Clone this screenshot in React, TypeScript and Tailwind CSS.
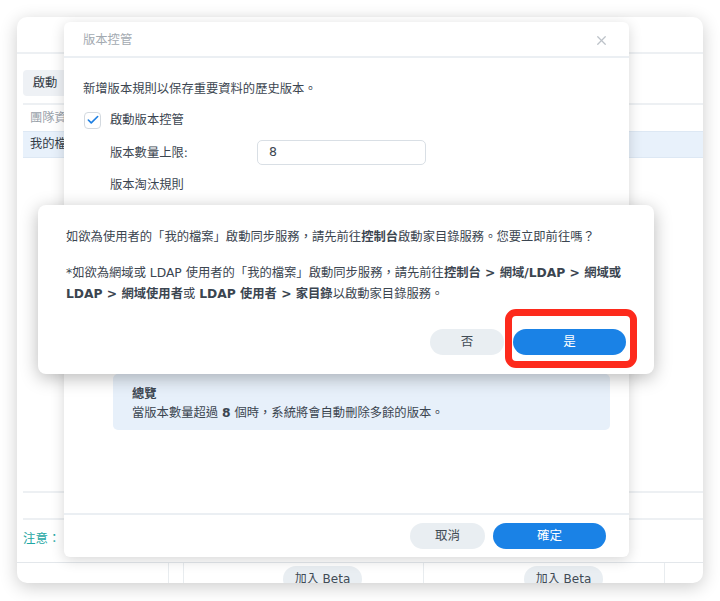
import { Check, X } from "lucide-react";

const font = "font-['DejaVu_Sans','Noto_Sans_CJK_TC',sans-serif]";

function BackgroundWindow() {
  return (
    <div className="absolute left-[17px] top-[17px] w-[686px] h-[566px] bg-white rounded-[10px] overflow-hidden shadow-[0_4px_18px_rgba(0,0,0,0.2)] flex flex-col">
      <div className="h-[37px] border-b-2 border-[#edf0f3] shrink-0" />
      <div className="pl-[6px] pt-[16px] flex flex-col">
        <div className="w-[44px] h-[26px] bg-[#eef1f5] rounded-[4px] flex items-center justify-center text-[12.3px] text-[#333c46]">
          啟動
        </div>
        <div className="mt-[7px] border-b-2 border-[#edf0f3]" />
        <div className="h-[26px] flex items-center pl-[7px] text-[12.3px] text-[#9aa2ab]">團隊資料夾</div>
        <div className="h-[27px] flex items-center pl-[7px] text-[12.3px] text-[#333c46] bg-[#e8f1fb] border-y border-[#dde8f4]">
          我的檔案
        </div>
      </div>
      <div className="flex-1" />
      <div className="ml-[6px] h-[27px] border-t-2 border-[#edf0f3]" />
      <div className="ml-[6px] h-[44px] pb-[4px] border-t-2 border-[#edf0f3] flex items-center text-[12.5px] text-[#1ea7a4]">
        注意：
      </div>
      <div className="h-[21px] shrink-0 border-t border-[#e3e7eb] flex">
        <div className="w-[152px] border-r border-[#e8ecef]" />
        <div className="w-[15px] border-r border-[#e8ecef]" />
        <div className="w-[240px] border-r border-[#e8ecef] pl-[99px] pt-[3px]">
          <div className="w-[79px] h-[26px] rounded-full bg-[#e9eef2] flex items-center justify-center text-[12px] text-[#414b55]">
            加入 Beta
          </div>
        </div>
        <div className="w-[241px] border-r border-[#e8ecef] pl-[100px] pt-[3px]">
          <div className="w-[79px] h-[26px] rounded-full bg-[#e9eef2] flex items-center justify-center text-[12px] text-[#414b55]">
            加入 Beta
          </div>
        </div>
        <div className="flex-1" />
      </div>
    </div>
  );
}

function VersionDialog() {
  return (
    <div className="absolute left-[64px] top-[22px] w-[565px] h-[535px] bg-white rounded-[6px] shadow-[0_3px_14px_rgba(0,0,0,0.16)] flex flex-col">
      <div className="h-[36px] shrink-0 border-b-2 border-[#ebeff3] pl-[19px] pr-[20px] pt-[2px] flex items-center justify-between">
        <span className="text-[12.3px] text-[#a3aab1]">版本控管</span>
        <X size={15} strokeWidth={2} className="text-[#bcc2c8]" />
      </div>
      <div className="flex-1 px-[19px] pt-[21px] flex flex-col text-[12.3px] text-[#3b4550]">
        <div className="h-[20px] leading-[20px]">新增版本規則以保存重要資料的歷史版本。</div>
        <div className="mt-[11px] h-[20px] flex items-center">
          <div className="ml-[1px] w-[17px] h-[17px] rounded-[4px] border border-[#d3d9df] bg-white flex items-center justify-center">
            <Check size={14} strokeWidth={2.8} className="text-[#1e7fe2]" />
          </div>
          <span className="ml-[9px]">啟動版本控管</span>
        </div>
        <div className="mt-[10px] h-[25px] flex items-center pl-[27px]">
          <span className="w-[147px] pt-[2px]">版本數量上限:</span>
          <div className="w-[169px] h-[25px] rounded-[5px] border border-[#d9dfe5] flex items-center pl-[11px] text-[12.5px]">
            8
          </div>
        </div>
        <div className="mt-[10px] h-[20px] leading-[20px] pl-[27px]">版本淘汰規則</div>
        <div className="mt-[179px] ml-[30px] rounded-[5px] bg-[#e7f0fa] pl-[19px] pt-[11px] pb-[7px]">
          <div className="leading-[19px] font-bold">總覽</div>
          <div className="leading-[19px]">
            當版本數量超過 <span className="font-bold">8</span> 個時，系統將會自動刪除多餘的版本。
          </div>
        </div>
      </div>
      <div className="h-[44px] shrink-0 border-t-2 border-[#ebeff3] flex items-center justify-end gap-[8px] pr-[23px]">
        <div className="w-[75px] h-[26px] rounded-full bg-[#e9eef2] flex items-center justify-center text-[12.5px] text-[#414b55]">
          取消
        </div>
        <div className="w-[113px] h-[26px] rounded-full bg-[#1a82e6] flex items-center justify-center text-[12.5px] text-white">
          確定
        </div>
      </div>
    </div>
  );
}

function ConfirmDialog() {
  return (
    <div className="absolute left-[38px] top-[205px] w-[616px] h-[169px] bg-white rounded-[8px] shadow-[0_4px_18px_rgba(0,0,0,0.28)] flex flex-col px-[28px] pt-[22px] pb-[19px] text-[12.3px] text-[#3b4550]">
      <p className="leading-[21px]">
        如欲為使用者的「我的檔案」啟動同步服務，請先前往<b>控制台</b>啟動家目錄服務。您要立即前往嗎？
      </p>
      <p className="mt-[15px] leading-[21px]">
        *如欲為網域或 LDAP 使用者的「我的檔案」啟動同步服務，請先前往<b>控制台 &gt; 網域/LDAP &gt; 網域或 LDAP &gt; 網域使用者</b>或 <b>LDAP 使用者 &gt; 家目錄</b>以啟動家目錄服務。
      </p>
      <div className="mt-auto flex justify-end gap-[9px]">
        <div className="w-[74px] h-[26px] rounded-full bg-[#e9eef2] flex items-center justify-center text-[12.5px] text-[#414b55]">
          否
        </div>
        <div className="w-[113px] h-[26px] rounded-full bg-[#1a82e6] flex items-center justify-center text-[12.5px] text-white">
          是
        </div>
      </div>
      <div className="absolute left-[467px] top-[104px] w-[132px] h-[59px] border-[7px] border-[#fd2a1c] rounded-[11px]" />
    </div>
  );
}

export default function App() {
  return (
    <div className={`relative w-[720px] h-[601px] bg-white overflow-hidden ${font}`}>
      <BackgroundWindow />
      <VersionDialog />
      <ConfirmDialog />
    </div>
  );
}
